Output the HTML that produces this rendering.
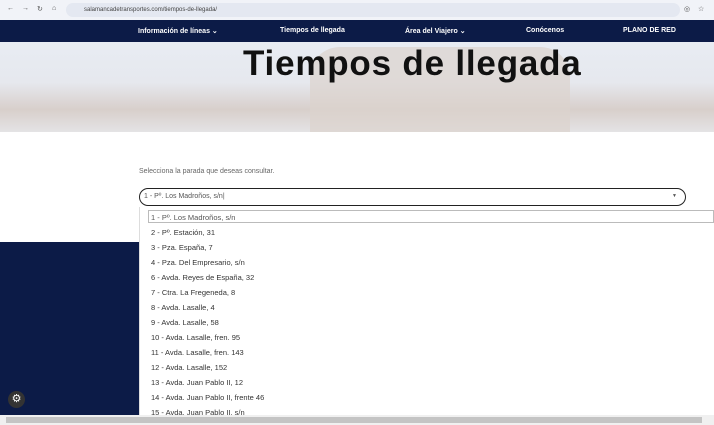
<!DOCTYPE html>
<html><head><meta charset="utf-8"><style>
*{margin:0;padding:0;box-sizing:border-box}
body{width:714px;height:425px;overflow:hidden;background:#fff;font-family:"Liberation Sans",sans-serif;position:relative}
.bar{position:absolute;left:0;top:0;width:714px;height:20px;background:#f1f3f8}
.url{position:absolute;left:66px;top:3px;width:614px;height:14px;border-radius:7px;background:#e4e8f1;font-size:6px;color:#444;padding:4px 0 0 18px}
.ic{position:absolute;top:5px;font-size:7px;color:#555}
.nav{position:absolute;left:0;top:20px;width:714px;height:22px;background:#0c1b47;color:#fff;font-size:7px;font-weight:bold}
.nav span{position:absolute;top:7px}
.hero{position:absolute;left:0;top:42px;width:714px;height:90px;overflow:hidden;background:linear-gradient(180deg,#e8ecf3 0%,#e6e8ee 45%,#d8cfcb 75%,#e4e3e5 100%)}
.cath{position:absolute;left:310px;top:5px;width:260px;height:85px;background:#dcd3cd;opacity:.7;border-radius:30px 30px 0 0}
h1{position:absolute;left:243px;top:44px;font-size:35px;font-weight:bold;color:#111;letter-spacing:0.8px}
.lbl{position:absolute;left:139px;top:168px;font-size:7px;color:#666}
.sel{position:absolute;left:139px;top:188px;width:547px;height:18px;border:1.5px solid #222;border-radius:9px;font-size:7px;color:#555;padding:4px 0 0 4px}
.navy{position:absolute;left:0;top:242px;width:139px;height:173px;background:#0c1b47}
.list{position:absolute;left:139px;top:207px;width:575px;height:208px;background:#fff;border-left:1px solid #ddd;overflow:hidden}
.list div{height:15px;font-size:7.5px;color:#333;padding:4px 0 0 11px}
.list .f{border:1px solid #bbb;margin:3px 0 1px 8px;padding:2px 0 0 2px;height:12.5px;color:#555}
.sb{position:absolute;left:0;top:415px;width:714px;height:10px;background:#f0f0f0}
.sb i{position:absolute;left:6px;top:2px;width:696px;height:6px;background:#c4c4c4}
.gear{position:absolute;left:8px;top:391px;width:17px;height:17px;border-radius:50%;background:#333;color:#fff;font-size:11px;text-align:center;line-height:17px}
</style></head><body>
<div class="bar"><span class="ic" style="left:7px">←</span><span class="ic" style="left:22px">→</span><span class="ic" style="left:37px">↻</span><span class="ic" style="left:52px">⌂</span>
<div class="url">salamancadetransportes.com/tiempos-de-llegada/</div><span class="ic" style="left:684px">◎</span><span class="ic" style="left:698px">☆</span></div>
<div class="nav"><span style="left:138px">Información de líneas ⌄</span><span style="left:280px">Tiempos de llegada</span><span style="left:405px">Área del Viajero ⌄</span><span style="left:526px">Conócenos</span><span style="left:623px">PLANO DE RED</span></div>
<div class="hero"><div class="cath"></div></div>
<h1>Tiempos de llegada</h1>
<div class="lbl">Selecciona la parada que deseas consultar.</div>
<div class="sel">1 - Pº. Los Madroños, s/n|<span style="position:absolute;right:8px;top:4px;font-size:5px">▼</span></div>
<div class="navy"></div>
<div class="list">
<div class="f">1 - Pº. Los Madroños, s/n</div>
<div>2 - Pº. Estación, 31</div>
<div>3 - Pza. España, 7</div>
<div>4 - Pza. Del Empresario, s/n</div>
<div>6 - Avda. Reyes de España, 32</div>
<div>7 - Ctra. La Fregeneda, 8</div>
<div>8 - Avda. Lasalle, 4</div>
<div>9 - Avda. Lasalle, 58</div>
<div>10 - Avda. Lasalle, fren. 95</div>
<div>11 - Avda. Lasalle, fren. 143</div>
<div>12 - Avda. Lasalle, 152</div>
<div>13 - Avda. Juan Pablo II, 12</div>
<div>14 - Avda. Juan Pablo II, frente 46</div>
<div>15 - Avda. Juan Pablo II, s/n</div>
</div>
<div class="gear">⚙</div>
<div class="sb"><i></i></div>
</body></html>
